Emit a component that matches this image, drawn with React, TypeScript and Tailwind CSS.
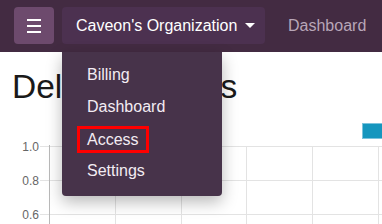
import React from "react";

const font = { fontFamily: '"Liberation Sans", Arial, sans-serif' };

function Chart() {
  const hLines = [40, 74, 108];
  const labels = ["1.0", "0.8", "0.6"];
  const vLines = [115.5, 181.5, 246.5, 312.5, 378.5];
  return (
    <svg width="382" height="118" className="block">
      {hLines.map((y) => (
        <line key={y} x1="40" x2="382" y1={y + 0.5} y2={y + 0.5} stroke="#e3e3e3" strokeWidth="1" />
      ))}
      {vLines.map((x) => (
        <line key={x} x1={x} x2={x} y1="40" y2="118" stroke="#e3e3e3" strokeWidth="1" />
      ))}
      <line x1="49.5" x2="49.5" y1="39" y2="118" stroke="#b9b9b9" strokeWidth="1" />
      {hLines.map((y, i) => (
        <text
          key={y}
          x="39"
          y={y + 4.5}
          textAnchor="end"
          fontSize="12"
          fill="#666666"
          fontFamily='"Liberation Sans", Arial, sans-serif'
        >
          {labels[i]}
        </text>
      ))}
      <rect x="362.5" y="17.5" width="24" height="15" fill="#1596be" stroke="#7cc3dc" strokeWidth="1" />
    </svg>
  );
}

export default function App() {
  return (
    <div className="relative w-[382px] h-[224px] overflow-hidden bg-white" style={font}>
      <nav className="h-[52px] bg-[#432b42] flex items-start pt-[7px] pl-[14px]">
        <button className="w-[40px] h-[37px] rounded-[4px] bg-[#6d4a6d] flex flex-col items-center justify-center gap-[4px]">
          <span className="block w-[14px] h-[2px] bg-white" />
          <span className="block w-[14px] h-[2px] bg-white" />
          <span className="block w-[14px] h-[2px] bg-white" />
        </button>
        <div className="ml-[8px] h-[37px] w-[203px] rounded-[4px] bg-[#4c3150] flex items-center pl-[14px] text-white text-[16px]">
          <span className="whitespace-nowrap">Caveon's Organization</span>
          <span className="ml-[8px] w-0 h-0 border-l-[5px] border-r-[5px] border-t-[5px] border-l-transparent border-r-transparent border-t-white" />
        </div>
        <div className="ml-[23px] h-[37px] flex items-center text-[16px] text-[#b8a6b8] whitespace-nowrap">
          Dashboard
        </div>
      </nav>
      <main className="pt-[16px]">
        <h1 className="pl-[12px] text-[33.5px] leading-[38px] text-[#1a1a1a] whitespace-nowrap">Delivery Forms</h1>
        <Chart />
      </main>
      <div className="absolute left-[62px] top-[52px] w-[160px] bg-[#47334a] rounded-b-[4px] pt-[7px] pb-[9px] shadow-[0_6px_16px_rgba(0,0,0,0.28)] text-[16px] text-[#f3ecf3]">
        <div className="h-[32px] flex items-center pl-[25px]">Billing</div>
        <div className="h-[32px] flex items-center pl-[25px]">Dashboard</div>
        <div className="h-[32px] flex items-center pl-[15px]">
          <span className="border-[3px] border-[#ff0000] px-[7px] leading-[21px]">Access</span>
        </div>
        <div className="h-[32px] flex items-center pl-[25px]">Settings</div>
      </div>
    </div>
  );
}
